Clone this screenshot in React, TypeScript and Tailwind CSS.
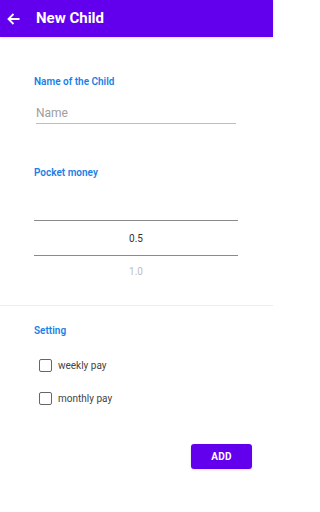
import React from 'react';

const font = { fontFamily: 'Roboto, "Liberation Sans", sans-serif' };

function Check({ label }: { label: string }) {
  return (
    <label className="flex h-[20px] items-center gap-[6px] pl-[5px]">
      <span className="h-[13px] w-[13px] rounded-[2px] border-[1.5px] border-[#666]" />
      <span className="text-[10px] text-[#444]">{label}</span>
    </label>
  );
}

export default function App() {
  return (
    <div className="h-[512px] w-[273px] bg-white" style={font}>
      <div className="flex h-[37px] items-center bg-[#6200ee] shadow-sm">
        <svg className="ml-[7px]" width="13" height="12" viewBox="0 0 13 12" fill="none" stroke="white" strokeWidth="1.8">
          <path d="M12.5 6H1.5M6.5 1L1.5 6L6.5 11" />
        </svg>
        <span className="ml-[16px] text-[15px] font-bold text-white">New Child</span>
      </div>

      <div className="px-[34px]">
        <div className="pt-[37px] text-[10px] font-semibold text-[#1a7fe6]">Name of the Child</div>
        <div className="mt-[16px] ml-[2px] w-[200px] border-b border-[#bdbdbd] pb-[2px] text-[12px] leading-[16px] text-[#9e9e9e]">
          Name
        </div>

        <div className="mt-[41px] text-[10px] font-semibold text-[#1a7fe6]">Pocket money</div>
        <div className="mt-[40px] w-[204px]">
          <div className="h-px bg-[#8a8a8a]" />
          <div className="flex h-[34px] items-center justify-center text-[10px] text-[#333]">0.5</div>
          <div className="h-px bg-[#8a8a8a]" />
          <div className="flex h-[30px] items-center justify-center text-[10px] text-[#bdbdbd]">1.0</div>
        </div>
      </div>

      <div className="mt-[19px] h-px bg-[#eeeeee]" />

      <div className="px-[34px]">
        <div className="mt-[17px] text-[10px] font-semibold text-[#1a7fe6]">Setting</div>
        <div className="mt-[17px] flex flex-col gap-[13px]">
          <Check label="weekly pay" />
          <Check label="monthly pay" />
        </div>
      </div>

      <div className="mt-[36px] flex justify-end pr-[21px]">
        <button className="h-[25px] w-[61px] rounded-[3px] bg-[#6200ee] text-[10px] font-bold tracking-wide text-white shadow">
          ADD
        </button>
      </div>
    </div>
  );
}
